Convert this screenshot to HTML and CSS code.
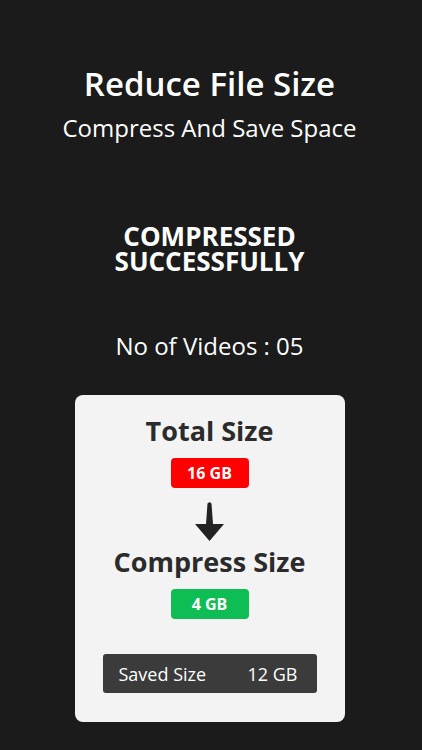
FILE: index.html
```html
<!DOCTYPE html>
<html>
<head>
  <title>Reduce File Size</title>
  <link rel="stylesheet" href="styles.css">
</head>
<body>
  <div class="screen">
    <!-- Header -->
    <div class="header">
      <h1>Reduce File Size</h1>
      <p class="subtitle">Compress And Save Space</p>
    </div>

    <!-- Status -->
    <h2 class="status">COMPRESSED<br>SUCCESSFULLY</h2>

    <p class="count">No of Videos : 05</p>

    <!-- Result card -->
    <div class="card">
      <h3 class="card-title">Total Size</h3>
      <span class="pill pill-red">16 GB</span>

      <svg class="arrow" width="29" height="39" viewBox="0 0 29 39">
        <path d="M12.5 1.5 L14.5 0 L16.5 1.5 L18 22 L29 22 L14.5 39 L0 22 L11 22 Z" fill="#222"/>
      </svg>

      <h3 class="card-title">Compress Size</h3>
      <span class="pill pill-green">4 GB</span>

      <div class="saved">
        <span>Saved Size</span>
        <span>12 GB</span>
      </div>
    </div>
  </div>
</body>
</html>
```

FILE: styles.css
```css
/* Page */
body {
  margin: 0;
  background-color: #1b1b1b;
  font-family: "Open Sans", sans-serif;
  color: #fff;
}

.screen {
  width: 422px;
  height: 750px;
  padding-right: 3px;
  box-sizing: border-box;
  display: flex;
  flex-direction: column;
  align-items: center;
  text-align: center;
}

/* Header */
.header {
  margin-top: 64px;
}

h1 {
  margin: 0;
  font-size: 33px;
  font-weight: 600;
  line-height: 40px;
}

.subtitle {
  margin: 9px 0 0;
  font-size: 24px;
  line-height: 30px;
}

/* Status text */
.status {
  margin: 81px 0 0;
  font-size: 26px;
  font-weight: 700;
  line-height: 25px;
}

.count {
  margin: 57px 0 0;
  font-size: 24px;
  line-height: 30px;
}

/* Card */
.card {
  width: 270px;
  margin-top: 34px;
  padding: 18px 0 29px;
  box-sizing: border-box;
  background-color: #f3f3f3;
  border-radius: 8px;
  color: #2b2b2b;
  display: flex;
  flex-direction: column;
  align-items: center;
}

.card-title {
  margin: 0;
  font-size: 27px;
  font-weight: 700;
  line-height: 36px;
}

.pill {
  margin-top: 9px;
  width: 78px;
  height: 30px;
  line-height: 30px;
  border-radius: 4px;
  color: #fff;
  font-size: 16px;
  font-weight: 700;
}

.pill-red {
  background-color: #fe0000;
}

.pill-green {
  background-color: #0fbd55;
}

.arrow {
  margin: 14px 0 3px;
}

/* Saved size bar */
.saved {
  margin-top: 35px;
  width: 214px;
  height: 39px;
  box-sizing: border-box;
  padding: 0 19px 0 16px;
  background-color: #3b3b3b;
  border-radius: 3px;
  color: #fff;
  font-size: 18px;
  display: flex;
  justify-content: space-between;
  align-items: center;
}
```
